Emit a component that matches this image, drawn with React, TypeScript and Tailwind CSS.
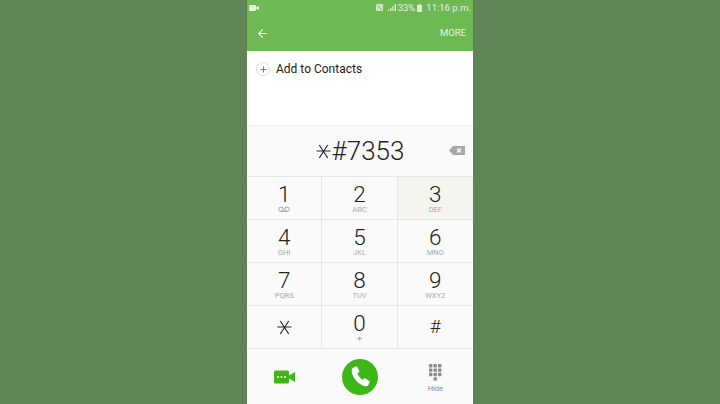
import { ArrowLeft, Plus } from "lucide-react";

const keys = [
  { digit: "1", sub: "voicemail" },
  { digit: "2", sub: "ABC" },
  { digit: "3", sub: "DEF" },
  { digit: "4", sub: "GHI" },
  { digit: "5", sub: "JKL" },
  { digit: "6", sub: "MNO" },
  { digit: "7", sub: "PQRS" },
  { digit: "8", sub: "TUV" },
  { digit: "9", sub: "WXYZ" },
  { digit: "*", sub: "" },
  { digit: "0", sub: "+" },
  { digit: "#", sub: "" },
];

function StarGlyph({ size }: { size: number }) {
  return (
    <svg width={size} height={size} viewBox="0 0 16 16" fill="none" stroke="#222" strokeWidth="1.2">
      <path d="M3.500 1 12.500 15M12.500 1 3.500 15M0.500 7.500h15" />
    </svg>
  );
}

function DialKey({ digit, sub, index }: { digit: string; sub: string; index: number }) {
  const pressed = digit === "3";
  const lastCol = index % 3 === 2;
  return (
    <div
      className={`flex h-[43px] flex-col items-center border-b border-[#e6e6e6] ${lastCol ? "" : "border-r"} ${pressed ? "bg-[#f3f5ee]" : ""}`}
    >
      {digit === "*" ? (
        <div className="mt-[14px]">
          <StarGlyph size={15} />
        </div>
      ) : digit === "#" ? (
        <span className="mt-[10px] text-[19px] leading-[22px] font-light text-[#222]">#</span>
      ) : (
        <span className="mt-[5.5px] text-[22.5px] leading-[22px] font-light text-[#222]">{digit}</span>
      )}
      {sub === "voicemail" ? (
        <svg className="mt-[1px]" width="12" height="7" viewBox="0 0 12 7" fill="none" stroke="#999" strokeWidth="0.9">
          <circle cx="3" cy="3.2" r="2.2" />
          <circle cx="9" cy="3.2" r="2.2" />
          <path d="M3 5.4h6" />
        </svg>
      ) : sub === "+" ? (
        <span className="mt-[1.5px] text-[9px] leading-[9px] text-[#999]">+</span>
      ) : sub ? (
        <span className="mt-[0.5px] text-[7.5px] leading-[9px] text-[#aaa]">{sub}</span>
      ) : null}
    </div>
  );
}

export default function App() {
  return (
    <div
      className="flex h-[404px] w-[720px] justify-center overflow-hidden bg-[#5f8455]"
      style={{ fontFamily: "Roboto, 'Liberation Sans', sans-serif" }}
    >
      <div className="flex h-full w-[226px] flex-col bg-[#fafafa]">
        {/* status + action bar */}
        <div className="h-[51px] bg-[#6eb951] text-white">
          <div className="flex h-[15px] items-center px-[2px]">
            <svg width="10" height="8" viewBox="0 0 10 8" fill="#e6f2e0">
              <rect x="0" y="1" width="7" height="6" rx="1" />
              <path d="M7 3.500 10 1.500v5L7 4.500z" />
            </svg>
            <div className="ml-auto flex items-center gap-[2px] text-[9.5px] leading-none text-[#e6f2e0]">
              <svg className="mr-[2px]" width="7" height="7" viewBox="0 0 7 7">
                <rect width="7" height="7" rx="1" fill="#cfe6c4" />
                <path d="M1.500 1.500 5.500 5.500" stroke="#6eb951" strokeWidth="1" />
              </svg>
              <svg className="ml-[1px]" width="8" height="7" viewBox="0 0 8 7" fill="#dceed4">
                <path d="M0 7h1.200V5.500H0zM2.200 7h1.200V4H2.200zM4.400 7h1.200V2H4.400zM6.600 7H8V0H6.600z" />
              </svg>
              <span>33%</span>
              <svg width="5" height="8" viewBox="0 0 5 8" fill="#dceed4">
                <path d="M1.500 0h2v1H5v7H0V1h1.500z" />
              </svg>
              <span className="ml-[2px]">11:16 p.m.</span>
            </div>
          </div>
          <div className="flex h-[36px] items-center pr-[7px] pl-[9px]">
            <ArrowLeft size={13} strokeWidth={2} />
            <span className="ml-auto text-[9.5px] text-[#e6f2e0]">MORE</span>
          </div>
        </div>

        {/* add to contacts */}
        <div className="h-[75px] border-b border-[#eeeeee] bg-white pt-[10px] pl-[9px]">
          <div className="flex items-center gap-[6px]">
            <div className="flex h-[14px] w-[14px] items-center justify-center rounded-full border border-[#dddddd]">
              <Plus size={9} strokeWidth={2.500} className="text-[#3f9a3f]" />
            </div>
            <span className="text-[12px] leading-[16px] text-[#222]">Add to Contacts</span>
          </div>
        </div>

        {/* number */}
        <div className="relative flex h-[51px] items-center justify-center border-b border-[#e6e6e6]">
          <div className="flex items-center">
            <StarGlyph size={15} />
            <span className="ml-[1px] text-[26px] leading-none font-light text-[#222]">#7353</span>
          </div>
          <svg className="absolute top-[20px] right-[8px]" width="16" height="9" viewBox="0 0 16 9">
            <path d="M4 0h12v9H4L0 4.500z" fill="#a8a8a8" />
            <path d="M8 2.500l4 4M12 2.500l-4 4" stroke="#fff" strokeWidth="1.200" />
          </svg>
        </div>

        {/* keypad */}
        <div className="grid grid-cols-3">
          {keys.map((k, i) => (
            <DialKey key={k.digit} digit={k.digit} sub={k.sub} index={i} />
          ))}
        </div>

        {/* bottom actions */}
        <div className="grid flex-1 grid-cols-3 items-center">
          <div className="flex justify-center">
            <svg width="21" height="14" viewBox="0 0 21 14">
              <rect x="0" y="0.500" width="15" height="13" rx="1.500" fill="#3fb618" />
              <path d="M15 5.500l6-3.500v10L15 8.500z" fill="#3fb618" />
              <circle cx="4" cy="7" r="1" fill="#fff" />
              <circle cx="7.500" cy="7" r="1" fill="#fff" />
              <circle cx="11" cy="7" r="1" fill="#fff" />
            </svg>
          </div>
          <div className="flex justify-center">
            <div className="flex h-[36px] w-[36px] items-center justify-center rounded-full bg-[#3fb618]">
              <svg width="26" height="26" viewBox="0 0 24 24" fill="#fff">
                <path d="M6.600 2.800 9.300 2l2.200 5.200-1.900 1.600c.8 2.300 2.600 4.500 4.800 5.800l2-1.600 4.600 3.200-.9 2.600c-.5 1.300-1.900 2.100-3.300 1.700C10.400 18.700 5 12.800 4.300 6.600 4.200 4.900 5.100 3.400 6.600 2.800z" />
              </svg>
            </div>
          </div>
          <div className="flex flex-col items-center pt-[3px]">
            <svg width="13" height="17" viewBox="0 0 13 17" fill="#8a8a8a">
              {[0, 1, 2, 3].flatMap((r) =>
                [0, 1, 2].map((c) =>
                  r === 3 && c !== 1 ? null : (
                    <rect key={`${r}-${c}`} x={c * 4.500} y={r * 4.400} width="3.400" height="3.400" rx="0.600" />
                  ),
                ),
              )}
            </svg>
            <span className="mt-[3px] text-[7.500px] leading-[9px] text-[#888]">Hide</span>
          </div>
        </div>
      </div>
    </div>
  );
}
